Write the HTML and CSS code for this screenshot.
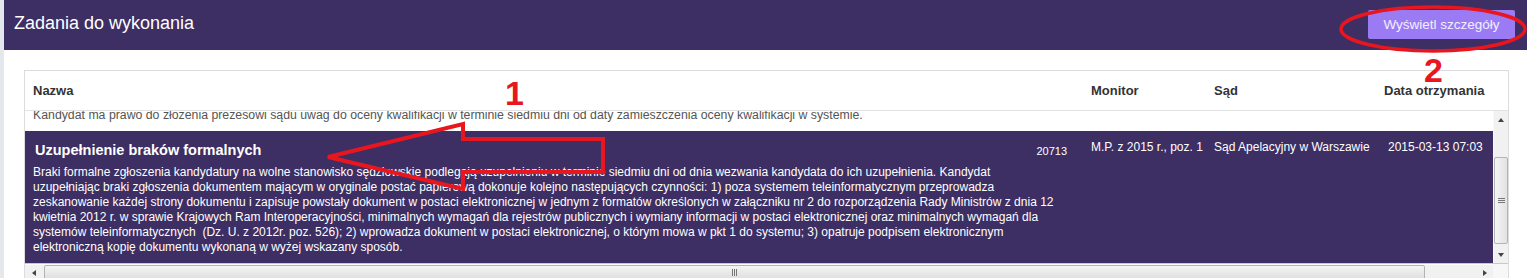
FILE: index.html
```html
<!DOCTYPE html>
<html lang="pl">
<head>
<meta charset="utf-8">
<title>Zadania do wykonania</title>
<link rel="stylesheet" href="styles.css">
</head>
<body>
<div class="page">
  <div class="edge"></div>
  <div class="main">
    <header class="topbar">
      <h1 class="title">Zadania do wykonania</h1>
      <button class="btn" type="button">Wyświetl szczegóły</button>
    </header>
    <section class="panel">
      <div class="grid">
        <div class="thead">
          <div class="th">Nazwa</div>
          <div class="th">Monitor</div>
          <div class="th">Sąd</div>
          <div class="th th-date">Data otrzymania</div>
        </div>
        <div class="tbody">
          <div class="viewport">
            <div class="rows">
              <div class="row row-prev">
                <div class="cell name"><p class="desc">Kandydat ma prawo do złożenia prezesowi sądu uwag do oceny kwalifikacji w terminie siedmiu dni od daty zamieszczenia oceny kwalifikacji w systemie.</p></div>
                <div class="cell"></div>
                <div class="cell"></div>
                <div class="cell"></div>
              </div>
              <div class="row selected">
                <div class="cell name">
                  <div class="name-head">
                    <span class="task-title">Uzupełnienie braków formalnych</span>
                    <span class="task-id">20713</span>
                  </div>
                  <p class="desc">Braki formalne zgłoszenia kandydatury na wolne stanowisko sędziowskie podlegają uzupełnieniu w terminie siedmiu dni od dnia wezwania kandydata do ich uzupełnienia. Kandydat<br>uzupełniając braki zgłoszenia dokumentem mającym w oryginale postać papierową dokonuje kolejno następujących czynności: 1) poza systemem teleinformatycznym przeprowadza<br>zeskanowanie każdej strony dokumentu i zapisuje powstały dokument w postaci elektronicznej w jednym z formatów określonych w załączniku nr 2 do rozporządzenia Rady Ministrów z dnia 12<br>kwietnia 2012 r. w sprawie Krajowych Ram Interoperacyjności, minimalnych wymagań dla rejestrów publicznych i wymiany informacji w postaci elektronicznej oraz minimalnych wymagań dla<br>systemów teleinformatycznych &nbsp;(Dz. U. z 2012r. poz. 526); 2) wprowadza dokument w postaci elektronicznej, o którym mowa w pkt 1 do systemu; 3) opatruje podpisem elektronicznym<br>elektroniczną kopię dokumentu wykonaną w wyżej wskazany sposób.</p>
                </div>
                <div class="cell">M.P. z 2015 r., poz. 1</div>
                <div class="cell">Sąd Apelacyjny w Warszawie</div>
                <div class="cell">2015-03-13 07:03</div>
              </div>
            </div>
          </div>
          <div class="vscroll">
            <div class="sb-btn"><span class="tri tri-up"></span></div>
            <div class="vtrack"><div class="vthumb"><span class="grip-h"></span></div></div>
            <div class="sb-btn"><span class="tri tri-down"></span></div>
          </div>
        </div>
        <div class="hscroll">
          <div class="htrack">
            <div class="sb-btn h"><span class="tri tri-left"></span></div>
            <div class="hthumb"><span class="grip-v"></span></div>
            <div class="hspace"></div>
            <div class="sb-btn h"><span class="tri tri-right"></span></div>
          </div>
          <div class="corner"></div>
        </div>
      </div>
    </section>
  </div>
</div>
<svg class="annot" width="1527" height="278" viewBox="0 0 1527 278" aria-hidden="true">
  <polygon points="328,157 463,124 463,139 603,139 603,172 463,172 463,189" fill="none" stroke="#e8161e" stroke-width="4" stroke-linejoin="miter"/>
  <ellipse cx="1433" cy="29" rx="92" ry="22" fill="none" stroke="#e8161e" stroke-width="3.5"/>
</svg>
<span class="mark mark-1">1</span>
<span class="mark mark-2">2</span>
</body>
</html>
```
FILE: styles.css
```css
* { box-sizing: border-box; }
html, body { margin: 0; padding: 0; }
body {
  width: 1527px;
  height: 278px;
  overflow: hidden;
  position: relative;
  background: #fff;
  font-family: "Liberation Sans", Arial, sans-serif;
}
.page { display: flex; height: 278px; }
.edge { width: 4px; flex: none; background: #e4e7eb; }
.main { flex: 1; min-width: 0; }

.topbar {
  height: 50px;
  background: #3d2e63;
  display: flex;
  justify-content: space-between;
  align-items: flex-start;
  padding: 0 12px 0 10px;
}
.title {
  margin: 0;
  padding-top: 13px;
  font-size: 18px;
  line-height: 20px;
  font-weight: normal;
  color: #fff;
}
.btn {
  margin-top: 10px;
  width: 147px;
  height: 29px;
  padding: 0;
  border: none;
  border-radius: 2px;
  background: #9b7bf4;
  color: #f3efff;
  font-family: inherit;
  font-size: 13.5px;
}

.panel { padding: 20px 18px 0 20px; }
.grid { border: 1px solid #dcdcdc; border-bottom: none; }
.thead {
  display: grid;
  grid-template-columns: 1058px 123px 174px 1fr;
  height: 40px;
  align-items: center;
  padding-right: 15px;
  border-bottom: 1px solid #e2e2e2;
}
.th {
  padding-left: 8px;
  font-size: 13px;
  line-height: 15px;
  font-weight: bold;
  color: #333;
}
.th-date { padding-left: 4px; }

.tbody { display: flex; height: 152px; }
.viewport { flex: 1; min-width: 0; overflow: hidden; }
.rows { margin-top: -3.1px; }
.row {
  display: grid;
  grid-template-columns: 1058px 123px 174px 1fr;
  font-size: 12px;
  line-height: 14.6px;
  white-space: nowrap;
}
.cell { padding-left: 8px; }
.desc { margin: 0; }
.row-prev { color: #555; padding-bottom: 8.5px; }
.row-prev .desc { font-size: 12.3px; }
.selected { background: #3d2e63; color: #fff; padding-bottom: 30px; }
.selected .cell { padding-top: 8.5px; }
.selected .cell.name { padding: 10px 16px 0 8px; }
.name-head {
  display: flex;
  justify-content: space-between;
  align-items: baseline;
}
.task-title {
  margin-left: 2px;
  font-size: 14.5px;
  line-height: 18px;
  font-weight: bold;
}
.task-id { font-size: 11px; }
.selected .desc { margin-top: 6.4px; line-height: 15px; }

/* scrollbars */
.vscroll {
  width: 15px;
  flex: none;
  display: flex;
  flex-direction: column;
  background: #f1f1f1;
  border-left: 1px solid #fafafa;
}
.sb-btn {
  height: 17px;
  flex: none;
  display: flex;
  align-items: center;
  justify-content: center;
}
.sb-btn.h { width: 17px; height: auto; }
.vtrack { flex: 1; padding-top: 29px; }
.vthumb {
  height: 87px;
  border: 1px solid #b4b4b4;
  border-radius: 2px;
  background: linear-gradient(to right, #f4f4f4, #e2e2e2);
  display: flex;
  align-items: center;
  justify-content: center;
}
.grip-h {
  width: 7px;
  height: 5px;
  border-top: 1px solid #777;
  border-bottom: 1px solid #777;
  position: relative;
}
.grip-h::after {
  content: "";
  position: absolute;
  left: 0; right: 0; top: 1px;
  border-top: 1px solid #777;
}
.tri { width: 0; height: 0; border-style: solid; border-color: transparent; }
.tri-up { border-width: 0 3.5px 4px 3.5px; border-bottom-color: #444; }
.tri-down { border-width: 4px 3.5px 0 3.5px; border-top-color: #444; }
.tri-left { border-width: 3.5px 4px 3.5px 0; border-right-color: #444; }
.tri-right { border-width: 3.5px 0 3.5px 4px; border-left-color: #444; }

.hscroll {
  display: flex;
  height: 17px;
  border-top: 1px solid #c9c9c9;
}
.htrack {
  flex: 1;
  display: flex;
  background: #f1f1f1;
  border-top: 1px solid #fcfcfc;
}
.hthumb {
  width: 1381px;
  margin-left: 2px;
  border: 1px solid #b4b4b4;
  border-radius: 2px;
  background: linear-gradient(to bottom, #f5f5f5, #dedede);
  display: flex;
  align-items: center;
  justify-content: center;
}
.grip-v {
  width: 5px;
  height: 7px;
  border-left: 1px solid #777;
  border-right: 1px solid #777;
  position: relative;
}
.grip-v::after {
  content: "";
  position: absolute;
  top: 0; bottom: 0; left: 1px;
  border-left: 1px solid #777;
}
.hspace { flex: 1; }
.corner { width: 15px; flex: none; background: #f7f7f7; }

/* annotations */
.annot { position: absolute; left: 0; top: 0; pointer-events: none; }
.mark {
  position: absolute;
  font-family: "Liberation Sans", Arial, sans-serif;
  font-weight: bold;
  font-size: 34px;
  line-height: 34px;
  color: #e8161e;
}
.mark-1 { left: 505px; top: 76px; }
.mark-2 { left: 1424px; top: 53px; }
```
